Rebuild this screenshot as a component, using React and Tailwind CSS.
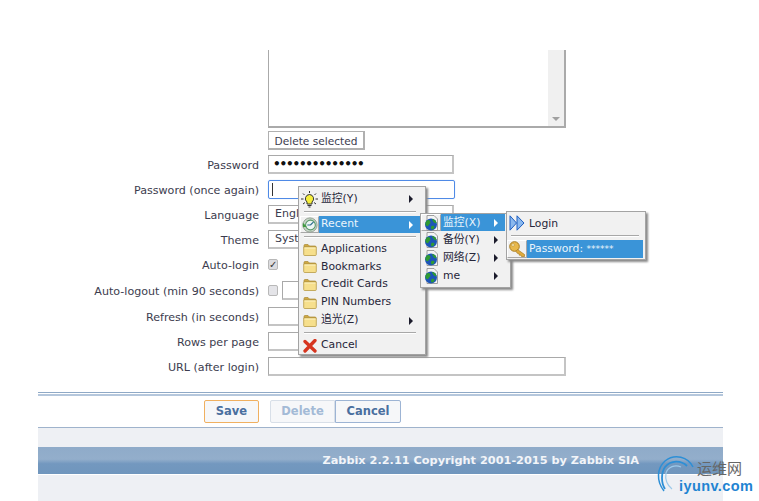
import React from 'react';

const dejavu = 'font-["DejaVu_Sans","Noto_Sans_CJK_SC",sans-serif]';

function Row({ label, children, className = 'mb-[6px]' }) {
  return (
    <div className={`flex h-[19px] items-center ${className}`}>
      <div className="w-[259px] mr-[9px] pt-[2px] text-right text-[11.1px] leading-[19px] text-[#3c3c4e] whitespace-nowrap">{label}</div>
      {children}
    </div>
  );
}

function Field({ className = 'w-[186px]', children }) {
  return (
    <div className={`h-[19px] border border-[#a9a9a9] border-b-2 border-r-2 border-b-[#c4c4c4] border-r-[#c4c4c4] bg-white flex items-center pl-[6px] text-[11px] text-[#3c3c4e] overflow-hidden ${className}`}>
      {children}
    </div>
  );
}

function Bulb() {
  return (
    <svg width="17" height="17" viewBox="0 0 17 17">
      <path d="M8.500 0v2M2 2.500l1.500 1.500M15 2.500L13.500 4M0 8h2.500M14.500 8H17M2 13l2-1.500M15 13l-2-1.500" stroke="#333" strokeWidth="1" />
      <path d="M8.500 3.500a4.200 4.200 0 0 0-2.500 7.500v2h5v-2a4.200 4.200 0 0 0-2.500-7.500z" fill="#f5ee3c" stroke="#333" />
      <path d="M6.500 14.500h4M7.500 16h2" stroke="#333" strokeWidth="1.200" />
    </svg>
  );
}

function RecentIcon() {
  return (
    <svg width="16" height="16" viewBox="0 0 18 18">
      <circle cx="9" cy="9" r="8" fill="#c9d6c9" stroke="#8a9a8a" />
      <circle cx="9.500" cy="9" r="5.500" fill="#eef6f4" stroke="#5a9a6a" strokeWidth="1.200" />
      <path d="M9.500 9l3.500-3.500M9.500 9H6" stroke="#2f6f8f" strokeWidth="1.300" />
      <path d="M1 6.500L5.500 11 1 11.500z" fill="#3f9a3f" />
    </svg>
  );
}

function Folder() {
  return (
    <svg width="14" height="13" viewBox="0 0 14 13">
      <path d="M1 3V2.500Q1 1.500 2 1.500h3l1.500 1.500H12q1 0 1 1V4H1z" fill="#cfa944" stroke="#a98a35" strokeWidth=".7" />
      <path d="M.7 4h12.600v7.500q0 1-1 1H1.700q-1 0-1-1z" fill="#f6df8c" stroke="#b89a45" strokeWidth=".8" />
      <path d="M1.500 5h11" stroke="#fdf3c4" />
    </svg>
  );
}

function CancelIcon() {
  return (
    <svg width="14" height="14" viewBox="0 0 14 14">
      <path d="M2 2.500L12 12M12 1.500L2 12" stroke="#d6351f" strokeWidth="3.300" strokeLinecap="round" />
    </svg>
  );
}

function GlobeDoc() {
  return (
    <svg width="15" height="16" viewBox="0 0 15 16">
      <path d="M3 .5h7l3.500 3.500v11.500H3z" fill="#f4f4f4" stroke="#8a8a8a" strokeWidth=".8" />
      <circle cx="7" cy="9.500" r="6" fill="#1c55b8" />
      <path d="M3 5.500c2-1 3 0 3.500 1.500S5 9 4.500 10.500 2 11 1.500 9.500 2 6 3 5.500zM8 4c2 0 4 1.500 4.500 4-1 .5-2.500 0-3-1S8 5 8 4zM7.500 11c1.500-.5 3 0 3 1s-1.500 2.500-2.500 2.500-1.500-2.500-.5-3.500z" fill="#2f9a32" />
    </svg>
  );
}

function DoubleArrow() {
  return (
    <svg width="16" height="16" viewBox="0 0 16 16">
      <path d="M1 .8l6.500 7.200L1 15.200z" fill="#8ab8ee" stroke="#1f5fc0" />
      <path d="M8 .8L15 8l-7 7.200z" fill="#8ab8ee" stroke="#1f5fc0" />
    </svg>
  );
}

function KeyIcon() {
  return (
    <svg width="16" height="16" viewBox="0 0 16 16">
      <circle cx="5.500" cy="5.500" r="4.800" fill="#e8b84c" stroke="#a87c22" />
      <ellipse cx="4" cy="4" rx="1.500" ry="1.200" fill="#fff3c4" stroke="#a87c22" strokeWidth=".5" />
      <path d="M8.500 8.500L15.500 13.500v2h-3l-1-1.500-1.200.2-.5-1.700-1.500-.2-1.300-2z" fill="#e0ab3c" stroke="#a87c22" strokeWidth=".7" />
    </svg>
  );
}

function MenuArrow({ light }) {
  return <span className={`ml-auto mr-[7px] w-0 h-0 border-y-[4px] border-y-transparent border-l-[4px] ${light ? 'border-l-white' : 'border-l-[#1c1c2c]'}`} />;
}

function Item({ icon, iconW = 'w-[19px]', h = 'h-[18px]', label, labelCls = '', arrow, active }) {
  return (
    <div className={`flex items-center ${h}`}>
      <div className={`${iconW} h-full shrink-0 flex justify-center items-center ${active ? 'border border-t-white border-l-white border-r-[#a8a8a8] border-b-[#a8a8a8]' : ''}`}>{icon}</div>
      <div className={`flex-1 min-w-0 h-full flex items-center pl-[2px] whitespace-nowrap ${active ? 'bg-[#3a94d8] text-[#eaf4fb]' : 'text-[#26263a]'}`}>
        <span className={labelCls}>{label}</span>
        {arrow && <MenuArrow light={active} />}
      </div>
    </div>
  );
}

function Sep() {
  return <div className="h-px bg-[#a8a8a8] border-b border-b-white box-content mx-[4px] my-[3px]" />;
}

export default function App() {
  return (
    <div className={`relative w-[759px] h-[501px] bg-white overflow-hidden ${dejavu}`}>
      <div className="pt-[50px]">
        {/* user form */}
        <div className="flex">
          <div className="w-[268px]" />
          <div className="w-[298px] h-[78px] border-2 border-t-0 border-[#aaaaaa] border-l-[1px] flex justify-end">
            <div className="w-[16px] bg-[#f0f0f0] flex items-end justify-center pb-[5px]">
              <span className="w-0 h-0 border-x-[4px] border-x-transparent border-t-[4px] border-t-[#a0a0a0]" />
            </div>
          </div>
        </div>
        <div className="flex mt-[3px] mb-[5px]">
          <div className="w-[268px]" />
          <button className="h-[19px] w-[97px] border border-[#b0b0b0] border-b-2 border-r-2 bg-white pt-[2px] text-[10.6px] leading-[14px] text-[#3c3c4e]">Delete selected</button>
        </div>
        <Row label="Password">
          <Field>
            <span className="text-[#111] text-[12px] tracking-[-1.2px] font-bold -ml-[2px]">••••••••••••••</span>
          </Field>
        </Row>
        <Row label="Password (once again)">
          <div className="w-[187px] h-[19px] border border-[#4f8ae6] rounded-[2px] shadow-[0_0_1px_#9dc0f0] flex items-center pl-[3px]">
            <div className="w-px h-[13px] bg-[#333]" />
          </div>
        </Row>
        <Row label="Language">
          <Field>English (en_GB)</Field>
        </Row>
        <Row label="Theme">
          <Field>System default</Field>
        </Row>
        <Row label="Auto-login" className="mb-[7px]">
          <div className="w-[10px] h-[11px] bg-[#dcdce0] border border-[#b8b8b8] rounded-[2px] text-[10px] leading-[9px] font-bold text-[#333] text-center">✓</div>
        </Row>
        <Row label="Auto-logout (min 90 seconds)" className="mb-[7px]">
          <div className="w-[10px] h-[11px] bg-[#e4e4e8] border border-[#b8b8b8] rounded-[2px] mr-[4px]" />
          <Field className="w-[40px]" />
        </Row>
        <Row label="Refresh (in seconds)">
          <Field className="w-[48px]" />
        </Row>
        <Row label="Rows per page">
          <Field className="w-[48px]" />
        </Row>
        <Row label="URL (after login)" className="mb-[16px]">
          <Field className="w-[298px]" />
        </Row>

        {/* action bar */}
        <div className="ml-[38px] w-[685px] border-t border-t-[#8fa9c6] h-[1px] border-b-2 border-b-[#b5c7dc] box-content" />
        <div className="ml-[38px] w-[685px] h-[32px] pt-[4px] flex items-start border-b border-b-[#9fb3cc]">
          <button className="ml-[166px] w-[55px] h-[23px] pt-[1px] border border-[#f0b060] rounded-[2px] bg-[#f6f7f9] text-[11.5px] font-bold text-[#4a6f9f]">Save</button>
          <button className="ml-[11px] w-[65px] h-[23px] pt-[1px] border border-[#d8dfe8] rounded-l-[2px] bg-[#f6f7f9] text-[11.5px] font-bold text-[#a3bad6]">Delete</button>
          <button className="w-[66px] h-[23px] pt-[1px] border border-[#9db4d4] rounded-r-[2px] bg-[#f6f7f9] text-[11.5px] font-bold text-[#4a6f9f]">Cancel</button>
        </div>

        {/* footer */}
        <div className="ml-[38px] w-[685px] h-[73px] bg-[#eef0f4]">
          <div className="h-[19px]" />
          <div className="h-[28px] border-b border-b-white bg-[linear-gradient(to_bottom,#8fabc9_0%,#93aecb_45%,#7398bf_62%,#7096bd_100%)] text-right pr-[84px] text-[11.3px] leading-[28px] font-bold text-[#f2f5f9] whitespace-nowrap">
            Zabbix 2.2.11 Copyright 2001-2015 by Zabbix SIA
          </div>
        </div>
      </div>

      {/* right-click menus */}
      <div className="absolute left-[298px] top-[186px] w-[128px] h-[169px] bg-[#f1f1f1] border border-[#a3a3a3] shadow-[2px_2px_2px_#8a8a8a] text-[10.8px] pt-[3px] pr-[5px] pl-[1px]">
        <Item icon={<Bulb />} label="监控(Y)" arrow />
        <Sep />
        <Item icon={<RecentIcon />} h="h-[17px]" label="Recent" arrow active />
        <Sep />
        <div className="-mt-[1px] -mb-[1px]">
          <Item icon={<Folder />} label="Applications" />
          <Item icon={<Folder />} h="h-[17.500px]" label="Bookmarks" />
          <Item icon={<Folder />} label="Credit Cards" />
          <Item icon={<Folder />} label="PIN Numbers" />
          <Item icon={<Folder />} label="追光(Z)" arrow />
        </div>
        <Sep />
        <Item icon={<CancelIcon />} label="Cancel" />
      </div>

      <div className="absolute left-[420px] top-[213px] w-[91px] h-[75px] bg-[#f1f1f1] border border-[#a3a3a3] shadow-[2px_2px_2px_#8a8a8a] text-[10.8px] pr-[5px]">
        <Item icon={<GlobeDoc />} iconW="w-[20px]" h="h-[17px]" labelCls="pt-[1px]" label="监控(X)" arrow active />
        <Item icon={<GlobeDoc />} iconW="w-[20px]" labelCls="pt-[1px]" label="备份(Y)" arrow />
        <Item icon={<GlobeDoc />} iconW="w-[20px]" labelCls="pt-[1px]" label="网络(Z)" arrow />
        <Item icon={<GlobeDoc />} iconW="w-[20px]" labelCls="pt-[1px]" label="me" arrow />
      </div>

      <div className="absolute left-[506px] top-[211px] w-[140px] h-[49px] bg-[#f1f1f1] border border-[#a3a3a3] shadow-[2px_2px_2px_#8a8a8a] text-[10.8px] pt-[2px] pr-[2px]">
        <Item icon={<DoubleArrow />} iconW="w-[20px]" labelCls="pt-[2px]" label="Login" />
        <Sep />
        <Item icon={<KeyIcon />} iconW="w-[20px]" label={<>Password: <span className="text-[9px]">******</span></>} active />
      </div>

      {/* site watermark */}
      <div className="absolute left-[655px] top-[453px] w-[100px] h-[44px]">
        <svg className="absolute left-0 top-0" width="40" height="42" viewBox="0 0 40 42">
          <path d="M38 14C33 4 20 0 10 8 2 15 1 28 9 38" fill="none" stroke="#2d8fd6" strokeWidth="1.500" />
          <path d="M32 13C26 7 16 7 10 14 6 20 6 30 10 36" fill="none" stroke="#2d8fd6" strokeWidth="1.800" />
          <path d="M26 14C20 11 13 14 11 20 10 26 12 32 17 36" fill="none" stroke="#9cc9ea" strokeWidth="1.200" />
        </svg>
        <div className="absolute left-[42px] top-[7px] text-[15px] leading-[18px] text-[#666] whitespace-nowrap">运维网</div>
        <div className="absolute left-[24px] top-[24px] text-[14.500px] leading-[18px] font-bold text-[#1f84d2] whitespace-nowrap font-['Liberation_Sans',sans-serif] tracking-[0.4px]">iyunv.com</div>
      </div>
    </div>
  );
}
